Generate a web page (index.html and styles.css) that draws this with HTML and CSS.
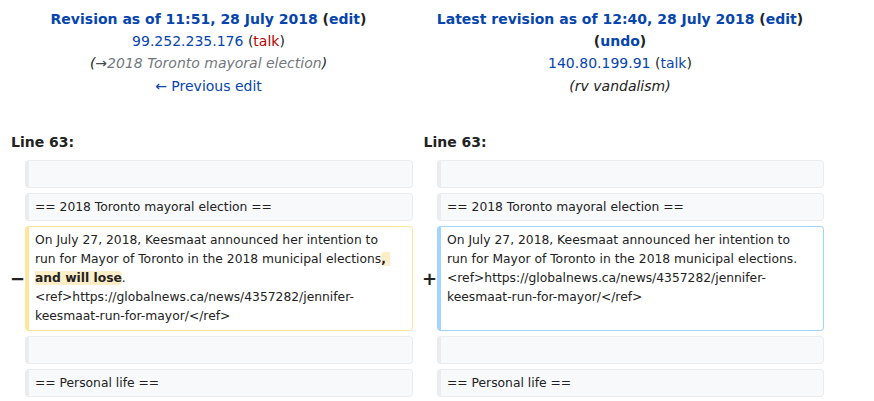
FILE: index.html
```html
<!DOCTYPE html>
<html lang="en">
<head>
<meta charset="utf-8">
<title>Difference between revisions</title>
<link rel="stylesheet" href="styles.css">
</head>
<body>
<div class="diff">
  <div class="title title-old">
    <div class="title-line"><strong><a class="link" href="#">Revision as of 11:51, 28 July 2018</a> (<a class="link" href="#">edit</a>)</strong></div>
    <div class="title-line"><a class="link" href="#">99.252.235.176</a> (<a class="new" href="#">talk</a>)</div>
    <div class="title-line comment">(<a class="arrow" href="#">→</a><span class="auto">2018 Toronto mayoral election</span>)</div>
    <div class="title-line"><a class="link" href="#">← Previous edit</a></div>
  </div>
  <div class="title title-new">
    <div class="title-line"><strong><a class="link" href="#">Latest revision as of 12:40, 28 July 2018</a> (<a class="link" href="#">edit</a>)</strong></div>
    <div class="title-line"><strong>(<a class="link" href="#">undo</a>)</strong></div>
    <div class="title-line"><a class="link" href="#">140.80.199.91</a> (<a class="link" href="#">talk</a>)</div>
    <div class="title-line comment plain">(rv vandalism)</div>
  </div>

  <div class="lineno">Line 63:</div>
  <div class="lineno lineno-new">Line 63:</div>

  <div class="marker"></div>
  <div class="cell context"></div>
  <div class="marker"></div>
  <div class="cell context"></div>

  <div class="marker"></div>
  <div class="cell context">== 2018 Toronto mayoral election ==</div>
  <div class="marker"></div>
  <div class="cell context">== 2018 Toronto mayoral election ==</div>

  <div class="marker">−</div>
  <div class="cell deleted">On July 27, 2018, Keesmaat announced her intention to run for Mayor of Toronto in the 2018 municipal elections<del class="change">, and will lose</del>. &lt;ref&gt;https://globalnews.ca/news/4357282/jennifer-keesmaat-run-for-mayor/&lt;/ref&gt;</div>
  <div class="marker">+</div>
  <div class="cell added">On July 27, 2018, Keesmaat announced her intention to run for Mayor of Toronto in the 2018 municipal elections. &lt;ref&gt;https://globalnews.ca/news/4357282/jennifer-keesmaat-run-for-mayor/&lt;/ref&gt;</div>

  <div class="marker"></div>
  <div class="cell context"></div>
  <div class="marker"></div>
  <div class="cell context"></div>

  <div class="marker"></div>
  <div class="cell context">== Personal life ==</div>
  <div class="marker"></div>
  <div class="cell context">== Personal life ==</div>
</div>
</body>
</html>
```

FILE: styles.css
```css
html, body {
  margin: 0;
  padding: 0;
  background: #ffffff;
}

body {
  font-family: "DejaVu Sans", sans-serif;
  color: #222222;
  font-size: 14px;
}

.diff {
  display: grid;
  grid-template-columns: 21px 388px 24px 387px;
  row-gap: 5px;
  padding: 7.5px 0 0 4px;
}

.title {
  grid-column: span 2;
  text-align: center;
  line-height: 22.4px;
}

.title-new {
  padding-left: 3px;
}

.title strong {
  font-weight: bold;
}

.link {
  color: #0645ad;
  text-decoration: none;
}

.new {
  color: #ba0000;
  text-decoration: none;
}

.comment {
  font-style: italic;
  color: #222222;
}

.arrow {
  color: #444a50;
  text-decoration: none;
}

.auto {
  color: #72777d;
}

.lineno {
  grid-column: 1 / span 2;
  font-weight: bold;
  line-height: 22.4px;
  padding-left: 7px;
  margin-top: 28.5px;
  margin-bottom: 2px;
}

.lineno-new {
  grid-column: 3 / span 2;
  padding-left: 10.5px;
}

.marker {
  align-self: center;
  text-align: right;
  font-weight: bold;
  font-size: 18px;
  line-height: 20px;
}

.cell {
  font-size: 12.32px;
  line-height: 19.2px;
  padding: 3.5px 10px 3.5px 6px;
  border: 1px solid #eaecf0;
  border-left-width: 4px;
  border-radius: 4px;
  background: #f8f9fa;
  color: #222222;
  min-height: 19.2px;
  word-wrap: break-word;
}

.cell.deleted {
  padding-top: 3.2px;
  padding-bottom: 3.2px;
  background: #ffffff;
  border-color: #ffe49c;
}

.cell.added {
  padding-top: 3.2px;
  padding-bottom: 3.2px;
  background: #ffffff;
  border-color: #a3d3ff;
}

.change {
  text-decoration: none;
  font-weight: bold;
  background: #feeec8;
  border-radius: 4px;
  white-space: pre-wrap;
}
```
